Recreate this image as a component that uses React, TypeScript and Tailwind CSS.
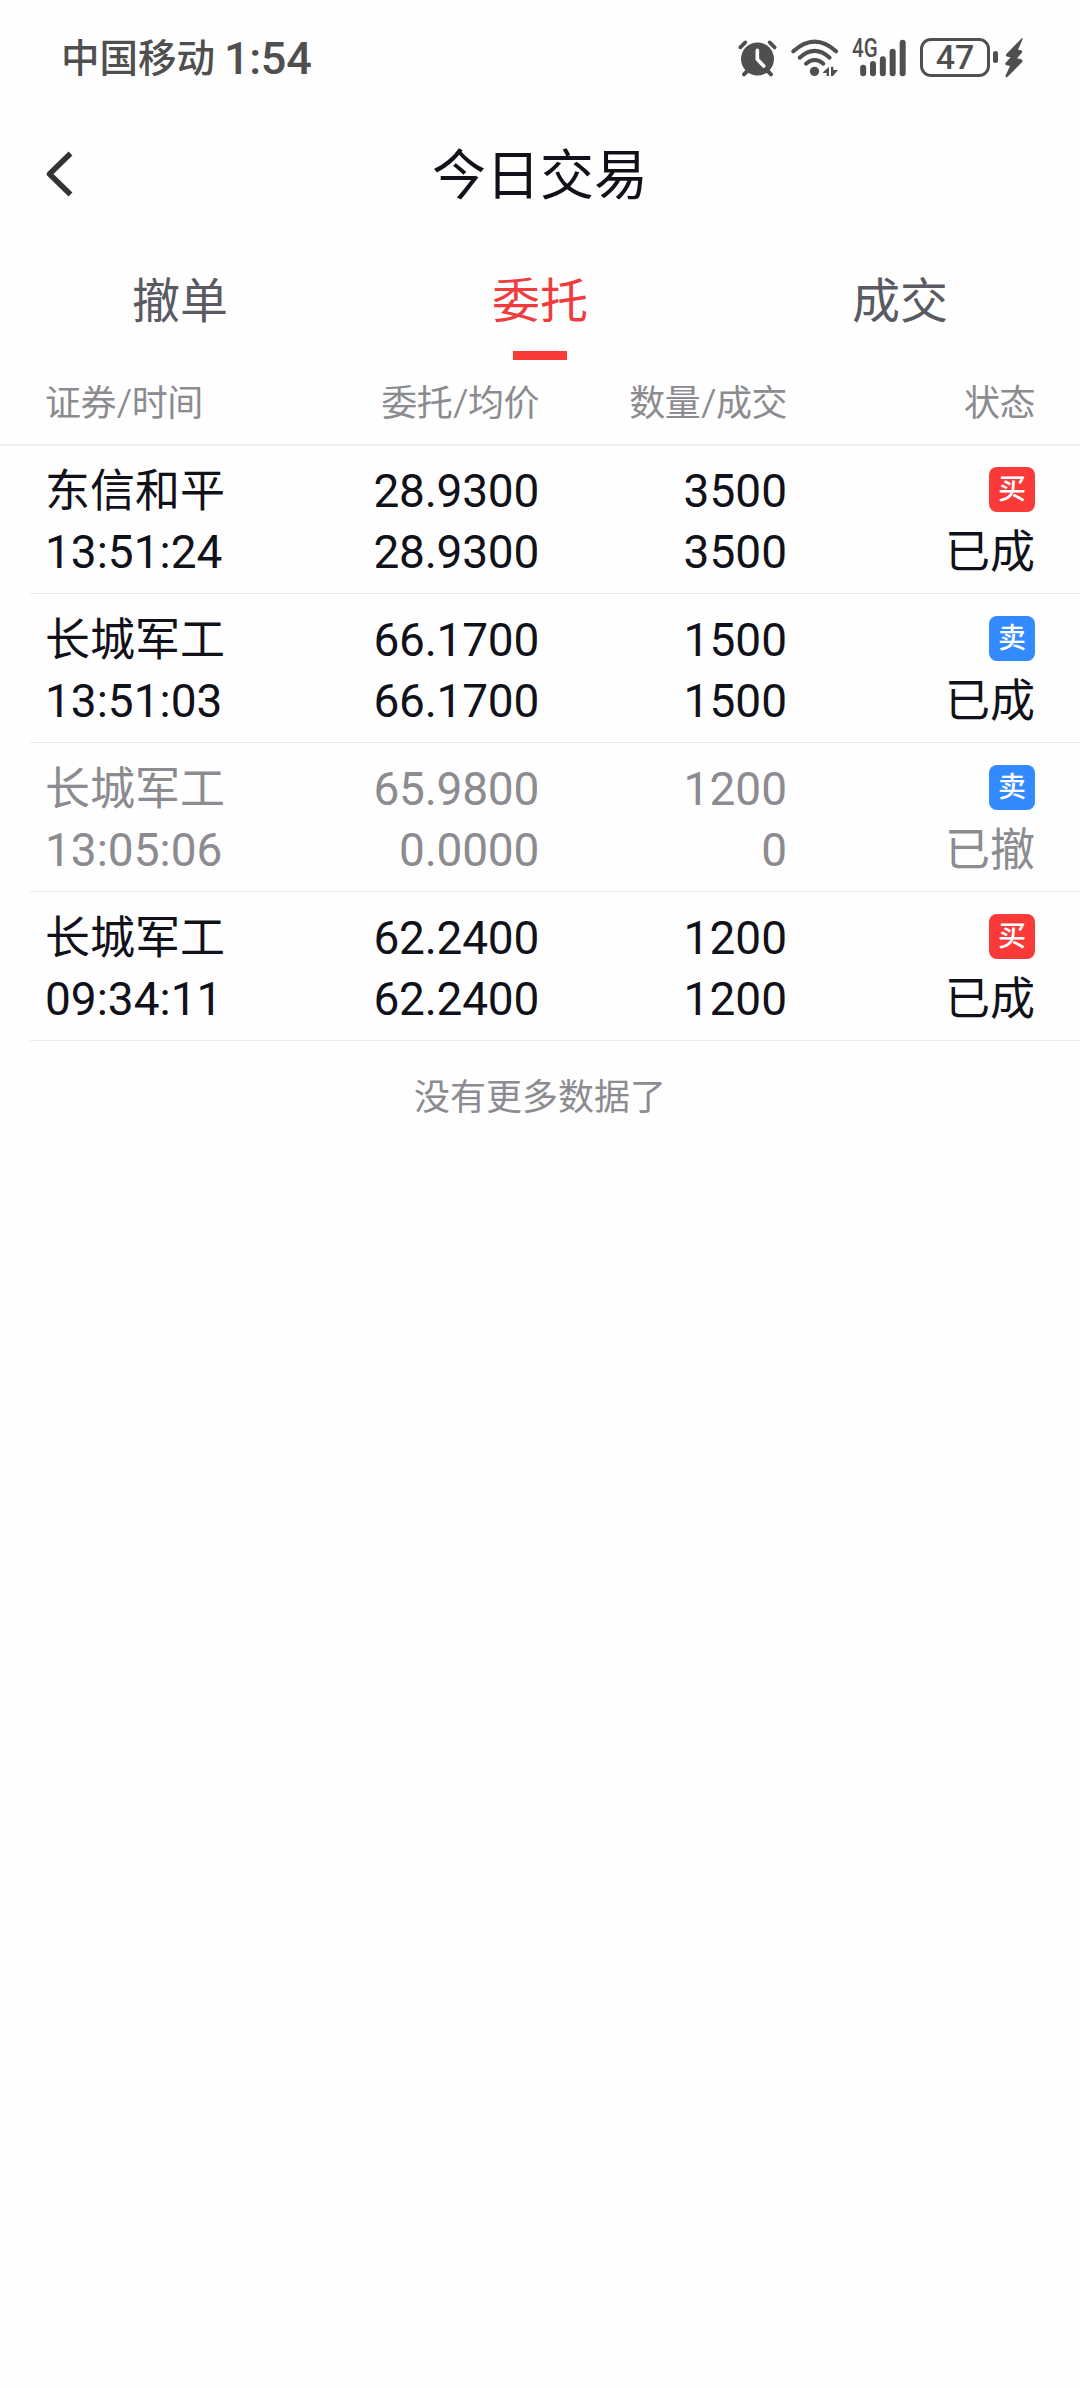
type Order = {
  name: string;
  time: string;
  price: string;
  avg: string;
  qty: string;
  filled: string;
  side: "buy" | "sell";
  status: string;
  cancelled?: boolean;
};

const orders: Order[] = [
  { name: "东信和平", time: "13:51:24", price: "28.9300", avg: "28.9300", qty: "3500", filled: "3500", side: "buy", status: "已成" },
  { name: "长城军工", time: "13:51:03", price: "66.1700", avg: "66.1700", qty: "1500", filled: "1500", side: "sell", status: "已成" },
  { name: "长城军工", time: "13:05:06", price: "65.9800", avg: "0.0000", qty: "1200", filled: "0", side: "sell", status: "已撤", cancelled: true },
  { name: "长城军工", time: "09:34:11", price: "62.2400", avg: "62.2400", qty: "1200", filled: "1200", side: "buy", status: "已成" },
];

const tabs = ["撤单", "委托", "成交"];
const activeTab = "委托";

function AlarmIcon() {
  return (
    <svg className="h-[41px] w-[41px]" viewBox="51 48 123 123" fill="none" stroke="currentColor" strokeLinecap="round">
      <circle cx="112.500" cy="114" r="49.500" fill="currentColor" stroke="none" />
      <path d="M61 79L76 64M149 64L164 79" strokeWidth="11" />
      <path d="M72 160L82 150M143 150L153 160" strokeWidth="12" />
      <path d="M112 88V115L131 135" stroke="#fff" strokeWidth="11" strokeLinejoin="round" />
    </svg>
  );
}

function WifiIcon() {
  return (
    <svg className="h-[41px] w-[49px]" viewBox="210 48 147 123" fill="none" stroke="currentColor" strokeLinecap="round">
      <path d="M220 91Q284 33 348 91" strokeWidth="12" />
      <path d="M239 110Q284 69 329 110" strokeWidth="12" />
      <path d="M258 128Q284 106 310 128" strokeWidth="12" />
      <circle cx="283.500" cy="151" r="14" fill="currentColor" stroke="none" />
      <path d="M309 154L327 137V165H320V156H309ZM333 137H340V147H354L339 165H333Z" fill="currentColor" stroke="none" />
    </svg>
  );
}

function SignalIcon() {
  return (
    <div className="relative h-[41px] w-[55px]">
      <svg className="h-[41px] w-[55px]" viewBox="396 48 165 123" fill="none" stroke="currentColor" strokeWidth="18" strokeLinecap="round">
        <path d="M429.500 140V157M459 129V157M488.500 115V157M518 92V157M548 65V157" />
      </svg>
      <span className="absolute -top-[2px] left-0 origin-left scale-x-[0.82] font-['Roboto'] text-[25px] leading-[28px] font-medium">4G</span>
    </div>
  );
}

function BatteryIcon() {
  return (
    <div className="flex items-center">
      <div className="flex h-[39px] w-[70px] items-center justify-center rounded-[11px] border-[3px] border-current font-['Roboto'] text-[34px] leading-[33px] font-medium">
        47
      </div>
      <div className="ml-[3px] h-[12px] w-[5px] rounded-full bg-current" />
    </div>
  );
}

function BoltIcon() {
  return (
    <svg className="h-[41px] w-[18px]" viewBox="857 48 54 123" fill="currentColor">
      <path d="M908 51L861 99Q857 105 864 107L874 109L859 125Q855 131 862 133L872 135L858 165Q860 171 865 167L908 124Q912 117 905 115L893 112L907 96Q911 90 905 88L896 86L910 55Q911 50 908 51Z" />
    </svg>
  );
}

function StatusBar() {
  return (
    <header className="flex h-[114px] items-center justify-between pr-[57px] pl-[61px] text-[#4f4f4f]">
      <div className="flex items-center">
        <span className="text-[38.500px] leading-[44px] font-medium">中国移动</span>
        <span className="mt-[3px] ml-[9px] font-['Roboto'] text-[45px] leading-[44px] font-medium tracking-[-0.300px]">1:54</span>
      </div>
      <div className="flex items-center">
        <AlarmIcon />
        <div className="ml-[12px]"><WifiIcon /></div>
        <div className="ml-[13px]"><SignalIcon /></div>
        <div className="ml-[13px]"><BatteryIcon /></div>
        <div className="ml-[7px]"><BoltIcon /></div>
      </div>
    </header>
  );
}

function TitleBar() {
  return (
    <div className="grid h-[120px] grid-cols-[100px_1fr_100px] items-center">
      <svg className="ml-[44px] h-[46px] w-[30px]" viewBox="0 0 30 46" fill="none" stroke="#333333" strokeWidth="5.500">
        <path d="M26.500 2.500L5.500 23L26.500 43.500" strokeLinejoin="round" />
      </svg>
      <h1 className="pt-[2px] text-center text-[54px] leading-[64px]">今日交易</h1>
    </div>
  );
}

function TabBar() {
  return (
    <nav className="grid h-[126px] grid-cols-3 text-[48px] text-[#5a5a62]">
      {tabs.map((tab) => (
        <div key={tab} className={tab === activeTab ? "flex flex-col items-center text-[#f03c3c]" : "flex flex-col items-center"}>
          <span className="mt-[34px] leading-[64px]">{tab}</span>
          {tab === activeTab && <span className="mt-[19px] h-[9px] w-[54px] bg-[#fa3a38]" />}
        </div>
      ))}
    </nav>
  );
}

function OrderRow({ order }: { order: Order }) {
  return (
    <li
      className={
        order.cancelled
          ? "ml-[30px] grid h-[149px] grid-cols-[200px_294px_248px_248px] border-b border-[#ebebeb] pt-[15px] pl-[15px] text-[45px] leading-[61px] text-[#8b8b90]"
          : "ml-[30px] grid h-[149px] grid-cols-[200px_294px_248px_248px] border-b border-[#ebebeb] pt-[15px] pl-[15px] text-[45px] leading-[61px]"
      }
    >
      <div className="whitespace-nowrap">
        <div>{order.name}</div>
        <div className="pt-px font-['Roboto'] text-[46px]">{order.time}</div>
      </div>
      <div className="pt-px text-right font-['Roboto'] text-[46px] tracking-[-0.250px]">
        <div>{order.price}</div>
        <div>{order.avg}</div>
      </div>
      <div className="pt-px text-right font-['Roboto'] text-[46px]">
        <div>{order.qty}</div>
        <div>{order.filled}</div>
      </div>
      <div className="flex flex-col items-end">
        <div className="h-[61px] pt-[7px]">
          <div
            className={
              order.side === "buy"
                ? "h-[45px] w-[46px] rounded-[8px] bg-[#fa3a38] text-center text-[28px] leading-[43px] font-medium text-white"
                : "h-[45px] w-[46px] rounded-[8px] bg-[#338aff] text-center text-[28px] leading-[43px] font-medium text-white"
            }
          >
            {order.side === "buy" ? "买" : "卖"}
          </div>
        </div>
        <div>{order.status}</div>
      </div>
    </li>
  );
}

export default function App() {
  return (
    <main className="min-h-[2388px] w-[1080px] bg-[#fefefe] font-['Lato','Noto_Sans_CJK_SC',sans-serif] text-[#11111a]">
      <StatusBar />
      <TitleBar />
      <TabBar />
      <div className="-mb-px grid h-[86px] grid-cols-[200px_294px_248px_248px] border-b-2 border-[#eeeeee] pt-[18px] pl-[45px] text-[36px] leading-[48px] tracking-[-0.500px] text-[#8b8b90]">
        <span>证券/时间</span>
        <span className="text-right">委托/均价</span>
        <span className="text-right">数量/成交</span>
        <span className="text-right">状态</span>
      </div>
      <ul>
        {orders.map((order) => (
          <OrderRow key={order.time} order={order} />
        ))}
      </ul>
      <p className="mt-[31px] text-center text-[36px] leading-[48px] text-[#8b8b90]">没有更多数据了</p>
    </main>
  );
}
